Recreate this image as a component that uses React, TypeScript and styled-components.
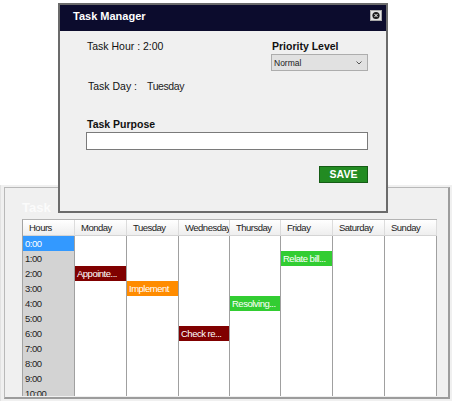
import React from 'react';
import styled, { createGlobalStyle } from 'styled-components';

const GlobalStyle = createGlobalStyle`
  html, body { margin: 0; padding: 0; background: #ffffff; }
  body { font-family: "Liberation Sans", Arial, sans-serif; }
`;

const COLS = '52px 52px 52px 51px 51px 52px 52px 52px';

const Page = styled.div`
  position: relative;
  width: 454px;
  height: 401px;
  overflow: hidden;
  background: #ffffff;
`;

const Panel = styled.section`
  box-sizing: border-box;
  margin-top: 185px;
  width: 452px;
  height: 216px;
  padding: 2px 0 0 3px;
  background: #f0f0f0;
  border-left: 1px solid #e2e2e2;
`;

const Frame = styled.div`
  box-sizing: border-box;
  width: 446px;
  height: 212px;
  border-left: 1px solid #b9b9b9;
  border-top: 1px solid #b9b9b9;
  border-right: 2px solid #9c9c9c;
  border-bottom: 2px solid #9c9c9c;
  display: flex;
  flex-direction: column;
`;

const Legend = styled.div`
  box-sizing: border-box;
  height: 31px;
  padding: 12px 0 0 17px;
  font-size: 13px;
  line-height: 15px;
  font-weight: 700;
  color: #fbfbfb;
`;

const GridBox = styled.div`
  box-sizing: border-box;
  margin-left: 17px;
  width: 415px;
  height: 177px;
  border-left: 1px solid #a3a3a3;
  border-top: 1px solid #b3b3b3;
  background: #ffffff;
  overflow: hidden;
  font-size: 9.5px;
  letter-spacing: -0.5px;
  color: #222222;
`;

const HeaderRow = styled.div`
  display: grid;
  grid-template-columns: ${COLS};
`;

const HeaderCell = styled.div`
  box-sizing: border-box;
  height: 16px;
  line-height: 15px;
  padding-left: 6px;
  white-space: nowrap;
  overflow: hidden;
  background: linear-gradient(#ffffff, #eeeeee);
  border-right: 1px solid #dcdcdc;
  border-bottom: 1px solid #d4d4d4;
`;

const BodyGrid = styled.div`
  display: grid;
  grid-template-columns: ${COLS};
  grid-auto-rows: 15px;
`;

const HourCell = styled.div<{ $selected?: boolean }>`
  box-sizing: border-box;
  padding-left: 2px;
  line-height: 15px;
  white-space: nowrap;
  overflow: hidden;
  background: ${(p) => (p.$selected ? '#3399ff' : '#d3d3d3')};
  color: ${(p) => (p.$selected ? '#ffffff' : '#1e1e1e')};
  border-right: 1px solid #a0a0a0;
`;

const DayCell = styled.div<{ $bg?: string }>`
  box-sizing: border-box;
  padding-left: 2px;
  line-height: 15px;
  white-space: nowrap;
  overflow: hidden;
  background: ${(p) => p.$bg || '#ffffff'};
  color: #ffffff;
  border-right: 1px solid #a0a0a0;
`;

const Dialog = styled.div`
  position: absolute;
  left: 58px;
  top: 3px;
  width: 330px;
  height: 210px;
  box-sizing: border-box;
  border: 2px solid #6b6b6b;
  background: #f0f0f0;
  display: flex;
  flex-direction: column;
`;

const TitleBar = styled.div`
  height: 26px;
  background: #0c0c2d;
  display: flex;
  justify-content: space-between;
  align-items: flex-start;
  padding-left: 13px;
`;

const TitleText = styled.div`
  margin-top: 5px;
  font-size: 11px;
  line-height: 13px;
  font-weight: 700;
  color: #ffffff;
`;

const CloseButton = styled.div`
  width: 12px;
  height: 11px;
  margin: 5px 4px 0 0;
  display: flex;
`;

const DialogBody = styled.div`
  display: flex;
  flex-direction: column;
  padding: 9px 18px 0 26px;
  font-size: 10.5px;
  color: #111111;
`;

const TopRow = styled.div`
  display: flex;
  justify-content: space-between;
  align-items: flex-start;
`;

const LeftCol = styled.div`
  display: flex;
  flex-direction: column;
`;

const RightCol = styled.div`
  display: flex;
  flex-direction: column;
  width: 97px;
`;

const Line = styled.div<{ $gap?: number; $indent?: number; $bold?: boolean }>`
  line-height: 13px;
  white-space: nowrap;
  margin-top: ${(p) => p.$gap || 0}px;
  padding-left: ${(p) => p.$indent ?? 1}px;
  font-weight: ${(p) => (p.$bold ? 700 : 400)};
`;

const DayValue = styled.span`
  margin-left: 10px;
  letter-spacing: -0.4px;
  color: #222222;
`;

const Select = styled.div`
  box-sizing: border-box;
  margin-top: 1px;
  height: 17px;
  background: #e1e1e1;
  border: 1px solid #adadad;
  display: flex;
  align-items: center;
  justify-content: space-between;
  padding: 0 5px 0 2px;
  font-size: 8.5px;
  color: #1a1a1a;
`;

const TextInput = styled.input`
  box-sizing: border-box;
  margin-top: 1px;
  width: 282px;
  height: 18px;
  border: 1px solid #7a7a7a;
  background: #ffffff;
  padding: 0 2px;
  outline: none;
  font-family: inherit;
`;

const SaveButton = styled.button`
  box-sizing: border-box;
  align-self: flex-end;
  margin-top: 16px;
  width: 49px;
  height: 17px;
  padding: 0;
  border: 1px solid #155c15;
  background: #228b22;
  color: #ffffff;
  font-family: inherit;
  font-size: 10.5px;
  font-weight: 700;
  line-height: 15px;
`;

type Ev = { day: number; hour: number; text: string; color: string };

const DAYS = ['Monday', 'Tuesday', 'Wednesday', 'Thursday', 'Friday', 'Saturday', 'Sunday'];
const HOURS = Array.from({ length: 11 }, (_, i) => i);
const EVENTS: Ev[] = [
  { day: 0, hour: 2, text: 'Appointe...', color: '#800000' },
  { day: 1, hour: 3, text: 'Implement', color: '#ff8c00' },
  { day: 2, hour: 6, text: 'Check re...', color: '#800000' },
  { day: 3, hour: 4, text: 'Resolving...', color: '#32cd32' },
  { day: 4, hour: 1, text: 'Relate bill...', color: '#32cd32' },
];

export default function App() {
  return (
    <Page>
      <GlobalStyle />
      <Panel>
        <Frame>
          <Legend>Task</Legend>
          <GridBox>
            <HeaderRow>
              <HeaderCell>Hours</HeaderCell>
              {DAYS.map((d) => (
                <HeaderCell key={d}>{d}</HeaderCell>
              ))}
            </HeaderRow>
            <BodyGrid>
              {HOURS.map((h) => (
                <React.Fragment key={h}>
                  <HourCell $selected={h === 0}>{h}:00</HourCell>
                  {DAYS.map((_, di) => {
                    const ev = EVENTS.find((e) => e.day === di && e.hour === h);
                    return (
                      <DayCell key={di} $bg={ev?.color}>
                        {ev?.text}
                      </DayCell>
                    );
                  })}
                </React.Fragment>
              ))}
            </BodyGrid>
          </GridBox>
        </Frame>
      </Panel>

      <Dialog>
        <TitleBar>
          <TitleText>Task Manager</TitleText>
          <CloseButton>
            <svg width="12" height="11" viewBox="0 0 12 11">
              <rect x="0.5" y="0.5" width="11" height="10" fill="#e3e3e3" stroke="#a8a8a8" />
              <circle cx="6" cy="5.5" r="3.6" fill="#1c1c1c" />
              <path d="M4.4 3.9 L7.6 7.1 M7.6 3.9 L4.4 7.1" stroke="#ffffff" strokeWidth="1" />
            </svg>
          </CloseButton>
        </TitleBar>
        <DialogBody>
          <TopRow>
            <LeftCol>
              <Line>Task Hour : 2:00</Line>
              <Line $gap={27} $indent={2}>
                Task Day :<DayValue>Tuesday</DayValue>
              </Line>
            </LeftCol>
            <RightCol>
              <Line $bold>Priority Level</Line>
              <Select>
                <span>Normal</span>
                <svg width="6" height="4" viewBox="0 0 6 4">
                  <polyline points="0.5,0.5 3,3 5.5,0.5" fill="none" stroke="#555" strokeWidth="1" />
                </svg>
              </Select>
            </RightCol>
          </TopRow>
          <Line $gap={25} $bold>Task Purpose</Line>
          <TextInput readOnly value="" />
          <SaveButton type="button">SAVE</SaveButton>
        </DialogBody>
      </Dialog>
    </Page>
  );
}
